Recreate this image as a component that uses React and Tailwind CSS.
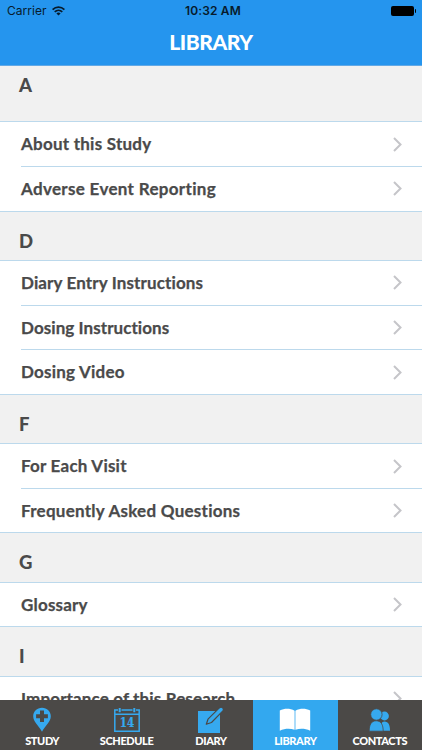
const SECTIONS = [
  { letter: 'A', items: [{ name: 'About this Study', tracking: 'tracking-[0.24px]' }, { name: 'Adverse Event Reporting', tracking: 'tracking-[0.32px]' }] },
  {
    letter: 'D',
    items: [
      { name: 'Diary Entry Instructions', tracking: 'tracking-[0.13px]' },
      { name: 'Dosing Instructions', tracking: 'tracking-[0.07px]' },
      { name: 'Dosing Video', tracking: 'tracking-[0.22px]' },
    ],
  },
  { letter: 'F', items: [{ name: 'For Each Visit', tracking: 'tracking-[0.22px]' }, { name: 'Frequently Asked Questions', tracking: 'tracking-[0.26px]' }] },
  { letter: 'G', items: [{ name: 'Glossary', tracking: 'tracking-[0.2px]' }] },
  { letter: 'I', items: [{ name: 'Importance of this Research', tracking: 'tracking-[0.14px]' }] },
]

const TABS = [
  { label: 'STUDY', Icon: PinIcon },
  { label: 'SCHEDULE', Icon: CalendarIcon },
  { label: 'DIARY', Icon: DiaryIcon },
  { label: 'LIBRARY', Icon: BookIcon, active: true },
  { label: 'CONTACTS', Icon: ContactsIcon },
]

function PinIcon() {
  return (
    <svg width="20" height="26" viewBox="0 0 20 26">
      <path d="M10 .7C4.9.7 1.200 4.500 1.200 9.200c0 5.300 5 8.500 8.800 15.600 3.800-7.100 8.800-10.300 8.800-15.600C18.800 4.500 15.100.700 10 .700Z" fill="#36a9ef"/>
      <path d="M8 3.500h4v3.700h3.900v4H12V15H8v-3.800H4.100v-4H8Z" fill="#4b4947"/>
    </svg>
  )
}

function CalendarIcon() {
  return (
    <svg width="28" height="26" viewBox="0 0 28 26" fill="none" stroke="#36a9ef">
      <path d="M5 3H1.800v21.200h24.400V3H23M8.500 3h11M2 7.300h24" strokeWidth="1.500"/>
      <path d="M6.700 1v4.300M21.300 1v4.300" strokeWidth="2"/>
      <text x="14" y="20" textAnchor="middle" fill="#36a9ef" strokeWidth=".2" fontFamily="'DejaVu Serif', serif" fontWeight="bold" fontSize="12.500" textLength="14.500" lengthAdjust="spacingAndGlyphs">14</text>
    </svg>
  )
}

function DiaryIcon() {
  return (
    <svg width="30" height="28" viewBox="0 0 30 28">
      <path d="M2 5h22v22H2Z" fill="#36a9ef"/>
      <path d="m10.300 18.200 1.700-5L23.300 1.900c2.400-1.800 5.100.600 3.600 3L15.500 16.500Z" fill="#36a9ef" stroke="#4b4947" strokeWidth="1.200" strokeLinejoin="round"/>
    </svg>
  )
}

function BookIcon() {
  return (
    <svg width="32" height="26" viewBox="0 0 32 26" fill="#fff">
      <path d="M.8 3.500C5.500 1.200 11 1.200 15.600 3.700v19.100c-4.700-1.600-9.900-1.300-14.800.9Z"/>
      <path d="M31.200 3.500C26.500 1.200 21 1.200 16.400 3.700v19.100c4.700-1.600 9.900-1.300 14.800.9Z"/>
    </svg>
  )
}

function ContactsIcon() {
  return (
    <svg width="22" height="24" viewBox="0 0 22 24" fill="#36a9ef">
      <circle cx="15.500" cy="8" r="4.400"/>
      <path d="M12 22.800c0-6 .2-9.300 3.500-9.300 4 0 5.500 3.800 5.500 9.300Z"/>
      <g stroke="#4b4947" strokeWidth=".8">
        <circle cx="7.400" cy="6.500" r="5.700"/>
        <path d="M.2 23.200c0-6.200 1.900-10.400 7-10.400s7 4.200 7 10.400Z"/>
      </g>
    </svg>
  )
}

function StatusBar() {
  return (
    <div className="grid h-[22px] grid-cols-3 items-center pl-[7px] pr-[6px] font-['Inter',sans-serif] text-[12px] text-[#071b2c]">
      <div className="flex items-center gap-[5px]">
        <span className="tracking-[0.05px]">Carrier</span>
        <svg width="13" height="10" viewBox="0 0 13 10" fill="none" stroke="#071b2c" strokeWidth="1.700">
          <path d="M.6 3.600c3.400-3.300 8.400-3.300 11.800 0M2.700 5.800c2.200-2.100 5.400-2.100 7.600 0"/>
          <path d="M6.500 9.600 4.400 7.400c1.200-1.100 3-1.100 4.200 0Z" fill="#071b2c" stroke="none"/>
        </svg>
      </div>
      <div className="pl-[3px] text-center font-semibold tracking-[0.15px]">10:32 AM</div>
      <div className="flex items-center justify-end">
        <div className="h-[10px] w-[23px] rounded-[2px] bg-black"/>
        <div className="ml-px h-[4px] w-[1px] rounded-r bg-black"/>
      </div>
    </div>
  )
}

function Row({ name, tracking }) {
  return (
    <li className="flex h-[44.67px] pl-[21px]">
      <div className="flex flex-1 items-center justify-between border-b border-[#bcd9ec] pr-[20px]">
        <span className={`text-[17px] font-bold [-webkit-text-stroke:0.25px_#4a4a4a] ${tracking}`}>{name}</span>
        <svg width="9" height="15" viewBox="0 0 9 15" fill="none" stroke="#c5c5c9" strokeWidth="2">
          <path d="m1 1 6.500 6.500L1 14"/>
        </svg>
      </div>
    </li>
  )
}

export default function App() {
  return (
    <div className="flex h-[750px] w-[422px] flex-col overflow-hidden bg-white font-['Lato',sans-serif] text-[#4a4a4a]">
      <header className="h-[66px] shrink-0 border-b border-[#62a9e6] bg-[#2595ee]">
        <StatusBar/>
        <h1 className="mt-[5px] text-center text-[21px] leading-[30px] font-black tracking-[-0.4px] text-white">LIBRARY</h1>
      </header>

      <main className="min-h-0 flex-1 overflow-hidden">
        {SECTIONS.map((s, i) => (
          <section key={s.letter}>
            <h2 className={`relative border-b border-[#bcd9ec] bg-[#f1f1f1] pl-[19px] text-[18.5px] leading-[24px] font-black ${i === 0 ? 'h-[56.300px] pt-[7px]' : '-mt-px h-[50.300px] border-t pt-[17px]'}`}>
              {s.letter}
            </h2>
            <ul>
              {s.items.map(item => <Row key={item.name} {...item}/>)}
            </ul>
          </section>
        ))}
      </main>

      <nav className="grid h-[50px] shrink-0 grid-cols-5 bg-[#4b4947]">
        {TABS.map(({ label, Icon, active }) => (
          <div key={label} className={`flex flex-col items-center ${active ? 'bg-[#33a8ef]' : ''}`}>
            <div className="flex h-[34px] items-center pt-[5px]"><Icon/></div>
            <span className="text-[11px] leading-[14px] font-black tracking-[-0.4px] text-white">{label}</span>
          </div>
        ))}
      </nav>
    </div>
  )
}
